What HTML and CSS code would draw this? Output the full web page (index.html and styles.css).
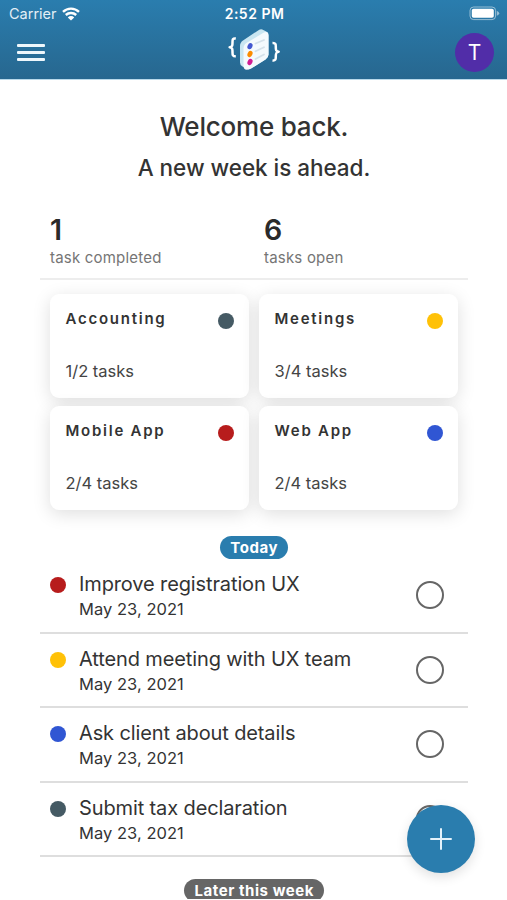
FILE: index.html
```html
<!DOCTYPE html>
<html lang="en">
<head>
<meta charset="utf-8">
<meta name="viewport" content="width=device-width, initial-scale=1">
<title>Tasks</title>
<link rel="stylesheet" href="styles.css">
</head>
<body>
<div class="screen">
  <header class="header">
    <div class="status">
      <div class="carrier">
        <span>Carrier</span>
        <svg class="wifi" viewBox="0 0 18 14" width="18" height="14" fill="none" stroke="#fff" stroke-width="2.4">
          <path d="M1 4.8a11.6 11.6 0 0 1 16 0"/>
          <path d="M3.8 8a7.6 7.6 0 0 1 10.4 0"/>
          <path d="M9 13.6 5.8 10.4a4.6 4.6 0 0 1 6.4 0z" fill="#fff" stroke="none"/>
        </svg>
      </div>
      <div class="clock">2:52 PM</div>
      <div class="battery">
        <svg viewBox="0 0 31 15" width="31" height="15">
          <rect x="1" y="1" width="25.6" height="12.6" rx="3.6" fill="none" stroke="#fff" stroke-opacity=".5"/>
          <rect x="2.8" y="2.8" width="22" height="9" rx="1.8" fill="#fff"/>
          <path d="M27.8 4.8q2.4 1 2.4 2.5t-2.4 2.5z" fill="#fff" fill-opacity=".5"/>
        </svg>
      </div>
    </div>
    <nav class="bar">
      <button class="menu" aria-label="Menu"><i></i><i></i><i></i></button>
      <svg class="logo" viewBox="0 0 54 50" width="54" height="50">
        <g fill="none" stroke="#fff" stroke-width="2.500" stroke-linejoin="round">
          <path d="M7.800 10.500c-3.200-.4-3.300 1.300-3.300 3.500 0 3 .2 4.900-2.900 5.200 3.100.4 2.900 2.300 2.900 5.300 0 2.300.2 4 3.300 3.800"/>
          <path d="M44.500 15c3.200-.2 3.300 1.500 3.300 3.600 0 3-.2 4.700 2.900 5.100-3.100.3-2.900 2.300-2.900 5 0 2.400-.2 4.100-3.300 3.700"/>
        </g>
        <path d="M12 18q0-3.500 3-5.500L30.500 2.200q2.500-1.500 4.800-.3l3 1.600q2.200 1.200 2.200 4v19q0 3-3 5L23 40.600q-2 1.200-4 .2l-4.500-2.300q-2.500-1.200-2.500-4z" fill="#c9e6f1"/>
        <path d="M15.500 20.500q0-3.500 3-5.500L35 5q5.500-2.800 5.500 2.500v19q0 3-3 5L23 40.600q-7.500 3.500-7.500-3z" fill="#f4fafd"/>
        <g stroke="#d5e2ea" stroke-width="1.800" stroke-linecap="round">
          <path d="m27.500 15.500 8.500-3.500M27.500 23.300l8.500-4M27.500 31l8.500-4.500"/>
        </g>
        <ellipse cx="22" cy="18.200" rx="2.400" ry="3.200" transform="rotate(26 22 18.200)" fill="#4358d0"/>
        <ellipse cx="22" cy="26" rx="2.400" ry="3.200" transform="rotate(26 22 26)" fill="#fb8c00"/>
        <ellipse cx="22" cy="34" rx="2.400" ry="3.200" transform="rotate(26 22 34)" fill="#d01c93"/>
      </svg>
      <div class="avatar">T</div>
    </nav>
  </header>

  <main class="content">
    <h1 class="welcome">Welcome back.</h1>
    <h2 class="tagline">A new week is ahead.</h2>

    <section class="stats">
      <div class="stat"><strong>1</strong><span>task completed</span></div>
      <div class="stat"><strong>6</strong><span>tasks open</span></div>
    </section>

    <section class="cards">
      <article class="card"><div class="card-head"><h3>Accounting</h3><i class="dot slate"></i></div><p>1/2 tasks</p></article>
      <article class="card"><div class="card-head"><h3>Meetings</h3><i class="dot yellow"></i></div><p>3/4 tasks</p></article>
      <article class="card"><div class="card-head"><h3>Mobile App</h3><i class="dot red"></i></div><p>2/4 tasks</p></article>
      <article class="card"><div class="card-head"><h3>Web App</h3><i class="dot blue"></i></div><p>2/4 tasks</p></article>
    </section>

    <div class="pill today">Today</div>
    <ul class="tasks">
      <li class="task"><i class="dot red"></i><div class="info"><b>Improve registration UX</b><time>May 23, 2021</time></div><span class="check"></span></li>
      <li class="task"><i class="dot yellow"></i><div class="info"><b>Attend meeting with UX team</b><time>May 23, 2021</time></div><span class="check"></span></li>
      <li class="task"><i class="dot blue"></i><div class="info"><b>Ask client about details</b><time>May 23, 2021</time></div><span class="check"></span></li>
      <li class="task"><i class="dot slate"></i><div class="info"><b>Submit tax declaration</b><time>May 23, 2021</time></div><span class="check"></span></li>
    </ul>
    <div class="pill later">Later this week</div>
  </main>

  <button class="fab" aria-label="Add task">
    <svg viewBox="0 0 22 22" width="22" height="22" stroke="#e4f2fa" stroke-width="2" stroke-linecap="round"><path d="M11 1v20M1 11h20"/></svg>
  </button>
</div>
</body>
</html>
```
FILE: styles.css
```css
* { box-sizing: border-box; margin: 0; padding: 0; }
body { background: #fff; color: #333; font-family: Inter, "Liberation Sans", sans-serif; }
button { border: 0; background: none; font: inherit; }
i, b { font-style: normal; font-weight: 400; }

.screen { position: relative; height: 899px; overflow: hidden; }

.header {
  height: 80px;
  background: linear-gradient(#2a7dae, #27678f);
  border-bottom: 1px solid #b9d9ea;
  color: #fff;
}
.status {
  display: grid;
  grid-template-columns: 1fr auto 1fr;
  align-items: center;
  height: 27px;
  padding: 0 7px 0 9px;
}
.carrier { display: flex; align-items: center; gap: 5px; font-size: 14.5px; color: #e3eff6; }
.clock { font-size: 14px; font-weight: 600; letter-spacing: .5px; }
.battery { display: flex; justify-content: flex-end; }
.bar {
  display: grid;
  grid-template-columns: 1fr auto 1fr;
  align-items: center;
  height: 51px;
  padding: 0 13px 0 17px;
}
.logo { margin-right: 1px; }
.menu { display: flex; flex-direction: column; gap: 4px; width: 28px; }
.menu i { height: 3px; border-radius: 1px; background: #eef7fc; }
.avatar {
  justify-self: end;
  width: 39px;
  height: 39px;
  border-radius: 50%;
  background: #512da8;
  font-size: 21px;
  line-height: 39px;
  text-align: center;
}

.content { width: 428px; margin: 0 auto 0 40px; }
.welcome { margin-top: 31px; font-size: 26px; line-height: 32px; font-weight: 500; letter-spacing: -.2px; text-align: center; }
.tagline { margin-top: 11px; font-size: 22.500px; line-height: 28px; font-weight: 500; letter-spacing: -.04px; text-align: center; }

.stats {
  display: grid;
  grid-template-columns: 1fr 1fr;
  height: 98px;
  padding-top: 30px;
  border-bottom: 2px solid #ededed;
}
.stat { display: flex; flex-direction: column; padding-left: 10px; }
.stat strong { font-size: 28.500px; line-height: 36px; font-weight: 600; color: #2a2a2a; }
.stat span { font-size: 15px; line-height: 20px; color: #757575; letter-spacing: .2px; }

.cards {
  display: grid;
  grid-template-columns: 199px 199px;
  grid-auto-rows: 104px;
  gap: 8px 10px;
  padding: 14px 10px 0;
}
.card { padding: 16px 15.5px 0; border-radius: 9px; background: #fff; box-shadow: 0 4px 18px rgba(0, 0, 0, .13); }
.card-head { display: flex; justify-content: space-between; }
.card h3 { font-size: 15px; line-height: 18px; font-weight: 600; letter-spacing: 1.75px; }
.card p { margin-top: 32px; font-size: 16.500px; line-height: 20px; color: #444; }
.dot { flex: none; width: 16px; height: 16px; border-radius: 50%; }
.card .dot { margin-top: 3px; }
.slate { background: #455a64; }
.yellow { background: #ffc107; }
.red { background: #b71c1c; }
.blue { background: #3056d3; }

.pill { width: fit-content; margin: 0 auto; height: 23px; border-radius: 12px; padding: 0 9.5px 0 10px; font-size: 15px; line-height: 23px; font-weight: 700; letter-spacing: .56px; color: #fff; }
.today { margin-top: 26px; background: #2a7dae; }
.later { margin-top: 22px; background: #666; }

.tasks { list-style: none; }
.task { display: flex; height: 74.600px; padding: 17px 24px 0 9.5px; border-bottom: 2px solid #dedede; }
.task .dot { margin-top: 1px; }
.info { flex: 1; display: flex; flex-direction: column; margin-left: 13.5px; }
.info b { font-size: 20px; line-height: 26px; margin-top: -5px; letter-spacing: -.12px; }
.info time { font-size: 16.500px; line-height: 24px; letter-spacing: .04px; }
.check { width: 28px; height: 28px; margin-top: 5px; border: 2px solid #666; border-radius: 50%; }

.fab {
  position: absolute;
  right: 32px;
  top: 804.500px;
  display: flex;
  align-items: center;
  justify-content: center;
  width: 68.500px;
  height: 68.500px;
  border-radius: 50%;
  background: #2a7dae;
  box-shadow: 0 4px 12px rgba(0, 0, 0, .12);
}
```
